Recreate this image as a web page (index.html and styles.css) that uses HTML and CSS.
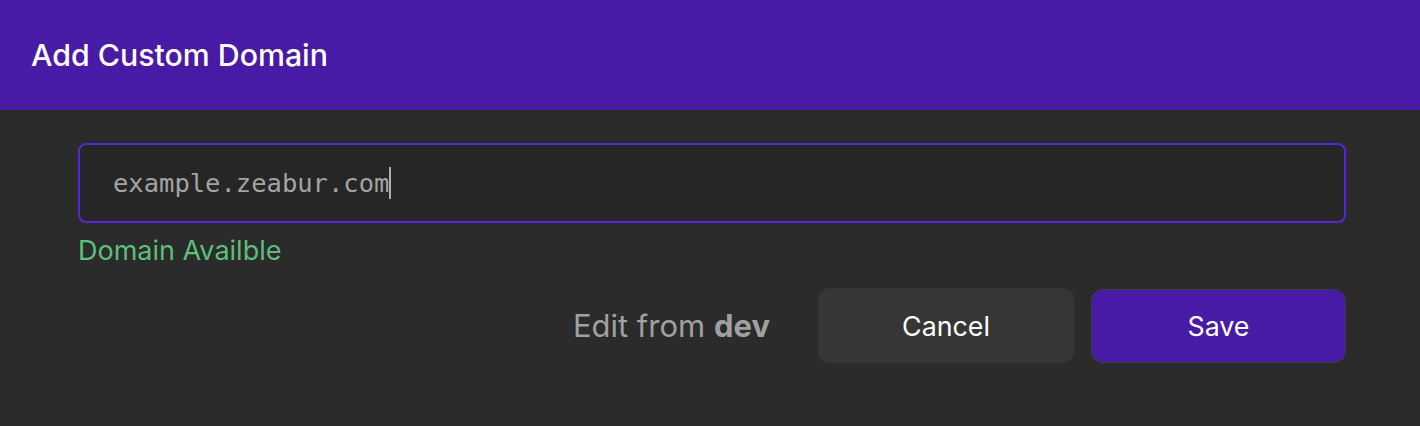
FILE: index.html
```html
<!DOCTYPE html>
<html>
<head>
<meta charset="utf-8">
<link rel="stylesheet" href="styles.css">
</head>
<body>
<div class="dialog">
  <header class="header">
    <h1 class="title">Add Custom Domain</h1>
  </header>
  <main class="content">
    <div class="field">
      <span class="field-text">example.zeabur.com</span><span class="caret"></span>
    </div>
    <div class="status">Domain Availble</div>
    <div class="actions">
      <span class="edit-from">Edit from <b>dev</b></span>
      <button class="btn btn-cancel">Cancel</button>
      <button class="btn btn-save">Save</button>
    </div>
  </main>
</div>
</body>
</html>
```

FILE: styles.css
```css
html, body {
  margin: 0;
  padding: 0;
  background: #2b2b2b;
}
body {
  width: 1420px;
  height: 426px;
  overflow: hidden;
  font-family: Inter, "Noto Sans", sans-serif;
}
.dialog {
  display: flex;
  flex-direction: column;
  height: 100%;
}
.header {
  height: 110px;
  flex-shrink: 0;
  background: #481ba6;
  display: flex;
  align-items: center;
  padding-left: 31px;
  box-sizing: border-box;
}
.title {
  margin: 0;
  color: #ffffff;
  font-size: 30.3px;
  font-weight: 500;
  line-height: 36px;
}
.content {
  padding: 33px 74px 0 78px;
  display: flex;
  flex-direction: column;
}
.field {
  height: 80px;
  box-sizing: border-box;
  border: 2px solid #5726d6;
  border-radius: 8px;
  background: #262626;
  display: flex;
  align-items: center;
  padding-left: 33px;
}
.field-text {
  font-family: "DejaVu Sans Mono", "Liberation Mono", monospace;
  font-size: 25.5px;
  color: #a3a3a3;
}
.caret {
  width: 2px;
  height: 32px;
  background: #b0b0b0;
}
.status {
  margin-top: 12px;
  color: #5dbf7a;
  font-size: 27px;
  line-height: 32px;
}
.actions {
  margin-top: 21px;
  display: flex;
  justify-content: flex-end;
  align-items: center;
  gap: 17px;
}
.edit-from {
  color: #a0a0a0;
  font-size: 31px;
  margin-right: 31px;
}
.edit-from b {
  font-weight: 700;
}
.btn {
  height: 75px;
  width: 256px;
  border-radius: 12px;
  border: none;
  font-family: Inter, "Noto Sans", sans-serif;
  font-size: 26.8px;
  color: #ffffff;
  cursor: pointer;
}
.btn-cancel {
  background: #363636;
}
.btn-save {
  width: 255px;
  height: 74px;
  background: #481ba6;
  border: 1px solid #3e3a48;
}
```
